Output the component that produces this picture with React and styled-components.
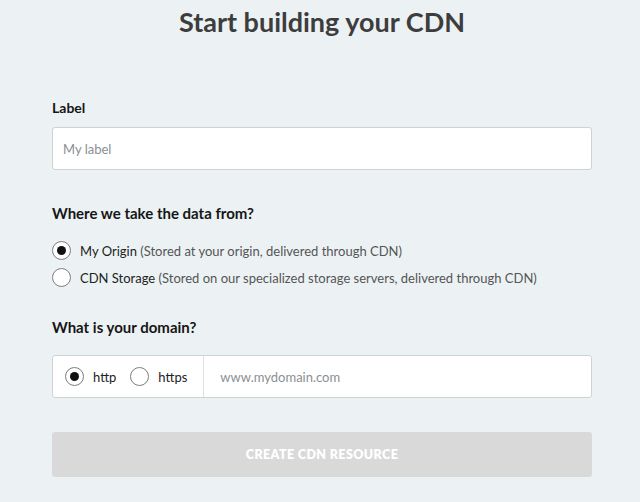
import React, { useState } from 'react';
import styled, { createGlobalStyle } from 'styled-components';

const GlobalStyle = createGlobalStyle`
html, body {
    margin: 0;
    padding: 0;
    background-color: #ecf2f4;
    font-family: Lato, "Open Sans", sans-serif;
}
`

const Page = styled.div`
width: 540px;
margin: 0 auto;
padding: 0 48px 0 52px;
`

const Title = styled.h1`
margin: 0;
padding-top: 6px;
text-align: center;
font-size: 27px;
font-weight: 700;
color: #3d3d3d;
line-height: 32px;
`

const Section = styled.div`
margin-top: ${props => props.top}px;
`

const SectionLabel = styled.div`
font-size: ${props => props.size || 15}px;
font-weight: 700;
color: #161616;
line-height: 20px;
`

const TextInput = styled.input`
box-sizing: border-box;
width: 100%;
height: 43px;
margin-top: 9px;
padding: 0 10px;
border: 1px solid #cfd2d3;
border-radius: 3px;
background: #fff;
font-family: inherit;
font-size: 13px;
color: #333;
outline: none;
&::placeholder {
    color: #8a8f92;
}
`

const RadioList = styled.div`
display: flex;
flex-direction: column;
gap: 8px;
margin-top: 18px;
`

const RadioRow = styled.label`
display: flex;
align-items: center;
gap: ${props => props.gap || 9}px;
font-size: 13px;
color: #222;
cursor: pointer;
span {
    color: #555;
}
`

const Dot = styled.div`
box-sizing: border-box;
width: 19px;
height: 19px;
border-radius: 50%;
border: 1px solid #7d7d7d;
background: #fff;
display: flex;
align-items: center;
justify-content: center;
flex-shrink: 0;
&::after {
    content: "";
    width: 9px;
    height: 9px;
    border-radius: 50%;
    background: #111;
    display: ${props => props.$checked ? 'block' : 'none'};
}
`

const DomainBox = styled.div`
box-sizing: border-box;
display: flex;
height: 43px;
margin-top: 18px;
border: 1px solid #cfd2d3;
border-radius: 3px;
background: #fff;
`

const Protocols = styled.div`
display: flex;
align-items: center;
gap: 14px;
padding: 0 16px 0 12px;
border-right: 1px solid #dde0e1;
`

const DomainInput = styled.input`
flex: 1;
border: none;
background: transparent;
padding: 0 16px;
font-family: inherit;
font-size: 13px;
outline: none;
&::placeholder {
    color: #8a8f92;
}
`

const SubmitButton = styled.button`
display: block;
width: 100%;
height: 45px;
margin-top: 34px;
border: none;
border-radius: 3px;
background: #d9d9d9;
color: #fff;
font-family: inherit;
font-size: 12.5px;
font-weight: 800;
letter-spacing: 0.4px;
text-transform: uppercase;
`

function Radio({ checked, onSelect, gap, children }) {
    return <RadioRow gap={gap} onClick={onSelect}>
        <Dot $checked={checked} />
        <div>{children}</div>
    </RadioRow>
}

export default function App() {
    const [source, setSource] = useState('origin');
    const [protocol, setProtocol] = useState('http');

    return <>
        <GlobalStyle />
        <Page>
            <Title>Start building your CDN</Title>
            <Section top={60}>
                <SectionLabel size={14}>Label</SectionLabel>
                <TextInput placeholder="My label" />
            </Section>
            <Section top={33}>
                <SectionLabel>Where we take the data from?</SectionLabel>
                <RadioList>
                    <Radio checked={source === 'origin'} onSelect={() => setSource('origin')}>
                        My Origin <span>(Stored at your origin, delivered through CDN)</span>
                    </Radio>
                    <Radio checked={source === 'storage'} onSelect={() => setSource('storage')}>
                        CDN Storage <span>(Stored on our specialized storage servers, delivered through CDN)</span>
                    </Radio>
                </RadioList>
            </Section>
            <Section top={30}>
                <SectionLabel>What is your domain?</SectionLabel>
                <DomainBox>
                    <Protocols>
                        <Radio gap={9} checked={protocol === 'http'} onSelect={() => setProtocol('http')}>http</Radio>
                        <Radio gap={9} checked={protocol === 'https'} onSelect={() => setProtocol('https')}>https</Radio>
                    </Protocols>
                    <DomainInput placeholder="www.mydomain.com" />
                </DomainBox>
            </Section>
            <SubmitButton>Create CDN resource</SubmitButton>
        </Page>
    </>
}
